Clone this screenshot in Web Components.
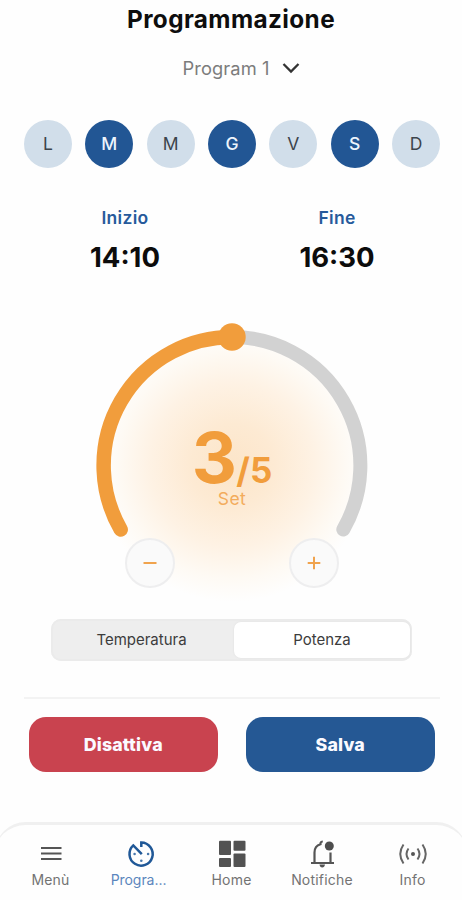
<!DOCTYPE html>
<html lang="it">
<head>
<meta charset="utf-8">
<title>Programmazione</title>
<style>
html,body{margin:0;height:100%;background:#fefefe;overflow:hidden}
body{font-family:Inter,"Liberation Sans",sans-serif}
</style>
</head>
<body>
<schedule-page></schedule-page>
<script>
const define = (name, render) => customElements.define(name, class extends HTMLElement {
  connectedCallback() {
    if (this.shadowRoot) return;
    this.attachShadow({mode: 'open'}).innerHTML = render(this);
  }
});

define('day-chip', () => `<style>
:host{display:grid;place-items:center;width:48px;height:48px;border-radius:50%;background:#d1deea;color:#3c444c;font-size:17.5px;line-height:1}
:host([active]){background:#225694;color:#edf4fc;font-weight:500}
</style><slot></slot>`);

define('time-field', el => `<style>
:host{display:block;text-align:center}
.label{font-size:17.500px;line-height:22px;font-weight:600;letter-spacing:.3px;color:#265a9b}
.time{margin-top:11px;font-size:27.500px;line-height:34px;font-weight:700;color:#0c0c0c}
</style><div class="label">${el.getAttribute('label')}</div><div class="time"><slot></slot></div>`);

define('round-button', () => `<style>
:host{display:grid;place-items:center;box-sizing:border-box;width:50px;height:50px;border-radius:50%;border:2px solid #eeeeef;background:#fafafa}
svg{display:block}
</style><slot></slot>`);

define('power-dial', () => `<style>
:host{display:grid;grid-template:300px / 300px;justify-content:center}
.ring,.content{grid-area:1/1}
.content{display:flex;flex-direction:column;align-items:center;color:#f19d3c;padding-top:113px;z-index:1}
.value{display:flex;align-items:baseline;height:66px;line-height:70px;font-weight:700;padding-left:0}
.big{font-size:70px;letter-spacing:-.5px;line-height:70px}
.small{font-size:35px;letter-spacing:0}
.set{font-size:17.500px;line-height:20px;letter-spacing:.4px;color:#f3ac5c}
.controls{display:flex;gap:114px;margin-top:29px}
</style>
<svg class="ring" width="300" height="300" viewBox="0 0 300 300">
<defs><radialGradient id="g"><stop offset="0" stop-color="#fce5c9"/><stop offset=".3" stop-color="#fdead3"/><stop offset=".6" stop-color="#fef2e4"/><stop offset=".83" stop-color="#fefaf4"/><stop offset="1" stop-color="#fefefe"/></radialGradient></defs>
<circle cx="150" cy="155" r="137" fill="url(#g)"/>
<path d="M150 27A128.500 128.500 0 0 1 261.300 219.500" fill="none" stroke="#d2d2d2" stroke-width="14" stroke-linecap="round"/>
<path d="M38.700 219.500A128.500 128.500 0 0 1 150 27" fill="none" stroke="#f19d3c" stroke-width="14.500" stroke-linecap="round"/>
<circle cx="150" cy="27" r="13.700" fill="#f19d3c"/></svg>
<div class="content"><div class="value"><span class="big">3</span><span class="small">/5</span></div><div class="set">Set</div>
<div class="controls"><round-button><svg width="14" height="14" viewBox="0 0 14 14"><path d="M.5 7h13" stroke="#f0a34d" stroke-width="2"/></svg></round-button><round-button><svg width="14" height="14" viewBox="0 0 14 14"><path d="M.7 7h12.600M7 .7v12.600" stroke="#f0a34d" stroke-width="2"/></svg></round-button></div></div>`);

define('segment-switch', () => `<style>
:host{display:grid;grid-template-columns:1fr 176px;box-sizing:border-box;width:361px;height:42px;padding:3px 2px 3px 0;border-radius:10px;background:#eee;box-shadow:inset 0 0 0 2px #ebebeb;font-size:15px;color:#3c3c3c}
::slotted(*){display:grid;place-items:center;line-height:18px}
::slotted(:first-child){padding-right:2px}
::slotted([selected]){background:#fff;border-radius:7px;box-shadow:0 0 2px #ddd}
</style><slot></slot>`);

define('action-button', el => `<style>
:host{display:grid;place-items:center;height:55px;border-radius:17px;color:#fbfaff;font-weight:800;font-size:17.800px;letter-spacing:.15px;background:${el.getAttribute('tone')}}
</style><slot></slot>`);

define('nav-item', el => `<style>
:host{display:flex;flex-direction:column;align-items:center;color:#737373;font-size:14px;line-height:18px}
:host([active]){color:#5b86bd}
svg{display:block;margin-bottom:2px}
span{white-space:nowrap;letter-spacing:.2px}
:host([active]) span{letter-spacing:-.05px;padding-right:5px}
</style><svg width="30" height="30" viewBox="0 0 30 30">${icons[el.getAttribute('icon')]}</svg><span><slot></slot></span>`);

const icons = {
  menu: '<path d="M5 9h20.500M5 14.500h20.500M5 20h20.500" stroke="#555" stroke-width="2"/>',
  timer: '<g fill="none" stroke="#205897" stroke-width="2.500"><path d="M15.300 8V3.400A11.600 11.600 0 1 1 7.300 6.400L15.800 15.200"/></g><g fill="#4878ad"><circle cx="8.600" cy="15" r="1.300"/><circle cx="22.100" cy="15" r="1.300"/><circle cx="15.300" cy="21.800" r="1.300"/></g>',
  home: '<g fill="#525252"><rect x="2" y="1.700" width="12" height="14.300" rx="1"/><rect x="16.500" y="1.700" width="12" height="10" rx="1"/><rect x="2" y="19" width="12" height="9" rx="1"/><rect x="16.500" y="14.500" width="12" height="13.500" rx="1"/></g>',
  bell: '<g fill="none" stroke="#555" stroke-width="2.200"><path d="M4 24H27M7.500 24V13.500Q7.500 6.800 13.500 5.200V4Q14 2.500 15.800 2.500M23.500 13.500V24"/></g><circle cx="22.300" cy="7" r="4.500" fill="#4d4d4d"/><path d="M12.500 25.500h5.500q-.5 3-2.800 3t-2.700-3z" fill="#555"/>',
  info: '<g fill="none" stroke="#666" stroke-width="2"><path d="M5.500 5.500Q-1 15 5.500 24.500M10.500 9.500Q6.500 15 10.500 20.500M19.500 9.500Q23.500 15 19.500 20.500M24.500 5.500Q31 15 24.500 24.500"/></g><circle cx="15" cy="15" r="2" fill="#555"/>'
};

define('bottom-nav', () => `<style>
:host{display:grid;grid-template-columns:repeat(5,90.500px);justify-content:center;box-sizing:border-box;margin:0 -5px;padding-left:1px;height:78px;padding-top:14px;border-top:3px solid #f0f0f0;border-radius:31px 31px 0 0;background:#fefefe}
</style><slot></slot>`);

define('schedule-page', () => `<style>
:host{display:flex;flex-direction:column;height:900px;background:#fefefe;overflow:hidden}
h1{margin:4px 0 0;height:30px;text-align:center;font-size:24.300px;letter-spacing:.4px;line-height:30px;font-weight:700;color:#0e0e0e}
.select{display:flex;justify-content:center;align-items:center;gap:12px;height:24px;margin-top:22px;padding-left:20px;font-size:18.300px;letter-spacing:.1px;color:#7c7c7c}
.days{display:flex;justify-content:space-between;margin:40px 22px 0 24px}
.times{display:grid;grid-template-columns:212px 212px;justify-content:center;margin:39px 0 0 0}
power-dial{margin:36px 0 0 2px}
segment-switch{margin:9px auto 0 51px}
hr{border:0;height:2px;background:#f3f3f3;margin:36px 22px 0 24px;flex:none}
.actions{display:grid;grid-template-columns:189.500px 189.500px;gap:27.500px;margin:18px 27px 0 28.500px}
bottom-nav{margin-top:auto}
</style>
<h1>Programmazione</h1>
<div class="select"><span>Program 1</span><svg width="18" height="12" viewBox="0 0 18 12"><path d="M1.500 2L9 9.500L16.500 2" fill="none" stroke="#333" stroke-width="2.300"/></svg></div>
<div class="days"><day-chip>L</day-chip><day-chip active>M</day-chip><day-chip>M</day-chip><day-chip active>G</day-chip><day-chip>V</day-chip><day-chip active>S</day-chip><day-chip>D</day-chip></div>
<div class="times"><time-field label="Inizio">14:10</time-field><time-field label="Fine">16:30</time-field></div>
<power-dial></power-dial>
<segment-switch><span>Temperatura</span><span selected>Potenza</span></segment-switch>
<hr>
<div class="actions"><action-button tone="#c9434f">Disattiva</action-button><action-button tone="#255894">Salva</action-button></div>
<bottom-nav><nav-item icon="menu">Menù</nav-item><nav-item icon="timer" active>Progra...</nav-item><nav-item icon="home">Home</nav-item><nav-item icon="bell">Notifiche</nav-item><nav-item icon="info">Info</nav-item></bottom-nav>`);
</script>
</body>
</html>
